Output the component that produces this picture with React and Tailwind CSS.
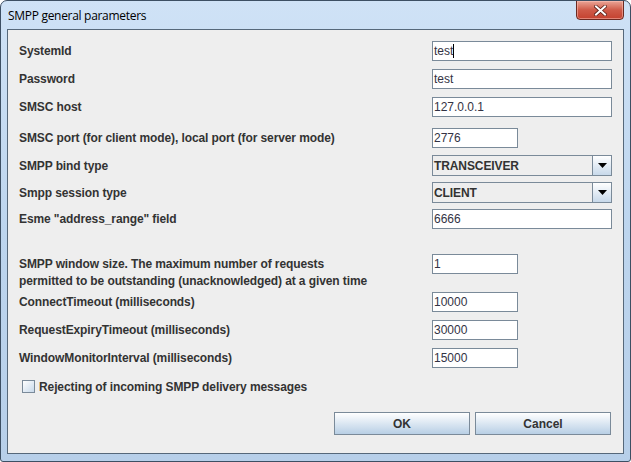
import React from "react";

const labelCls = "w-[413px] shrink-0 text-[12px] font-bold text-[#333333] leading-[14px] whitespace-nowrap tracking-[-0.1px]";

function Field({ value, w = "w-[180px]", h = "h-[20px]", caret = false }) {
  return (
    <div className={`${w} ${h} shrink-0 border border-[#7a8a99] bg-white flex items-center pl-[1px] text-[12px] text-[#333344]`}>
      <span>{value}</span>
      {caret && <span className="w-[1px] h-[14px] bg-black ml-[0px]" />}
    </div>
  );
}

function Combo({ value }) {
  return (
    <div className="w-[180px] h-[21px] shrink-0 border border-[#7a8a99] bg-[#eeeeee] flex">
      <div className="flex-1 flex items-center pl-[1px] text-[12px] font-bold text-[#333333] tracking-[-0.1px]">{value}</div>
      <div className="w-[19px] border-l border-[#7a8a99] bg-gradient-to-b from-[#ffffff] to-[#c8d9ea] flex items-center justify-center">
        <svg width="9" height="5" viewBox="0 0 9 5"><path d="M0 0H9L4.5 5Z" fill="#000" /></svg>
      </div>
    </div>
  );
}

function Row({ label, children, mt }) {
  return (
    <div className={`flex items-center ${mt} pl-[11px]`}>
      <div className={labelCls}>{label}</div>
      {children}
    </div>
  );
}

export default function App() {
  return (
    <div className="w-[631px] h-[462px] relative overflow-hidden rounded-t-[7px] rounded-b-[3px] border border-[#3d4f63] bg-gradient-to-b from-[#cfe2f6] via-[#bdd5ee] to-[#b7cfe9] font-['Liberation_Sans',Arial,sans-serif]">
      <div className="h-[28px] flex items-center pl-[7px] pt-[2px]">
        <span className="text-[12px] text-black font-['Open_Sans','Liberation_Sans',sans-serif] tracking-[-0.3px]">SMPP general parameters</span>
      </div>
      <div className="absolute left-[575px] top-[-1px] w-[48px] h-[20px] rounded-b-[4px] border border-[#6b2a22] bg-gradient-to-b from-[#e9a597] via-[#cf5a48] to-[#c4412f] flex items-center justify-center shadow-[inset_0_0_0_1px_rgba(255,200,190,0.5)]">
        <svg width="13" height="11" viewBox="0 0 13 11">
          <path d="M2 1.5L11 9.5M11 1.5L2 9.5" stroke="#5a2018" strokeWidth="3.6" strokeLinecap="square" />
          <path d="M2 1.5L11 9.5M11 1.5L2 9.5" stroke="#ffffff" strokeWidth="2" strokeLinecap="square" />
        </svg>
      </div>
      <div className="mx-[6px] h-[425px] border border-[#56687a] bg-[#eeeeee] flex flex-col">
        <Row label="SystemId" mt="mt-[11px]"><Field value="test" caret /></Row>
        <Row label="Password" mt="mt-[8px]"><Field value="test" /></Row>
        <Row label="SMSC host" mt="mt-[8px]"><Field value="127.0.0.1" /></Row>
        <Row label="SMSC port (for client mode), local port (for server mode)" mt="mt-[11px]"><Field value="2776" w="w-[86px]" /></Row>
        <Row label="SMPP bind type" mt="mt-[7px]"><Combo value="TRANSCEIVER" /></Row>
        <Row label="Smpp session type" mt="mt-[6px]"><Combo value="CLIENT" /></Row>
        <Row label={'Esme "address_range" field'} mt="mt-[6px]"><Field value="6666" /></Row>
        <div className="flex items-start mt-[25px] pl-[11px] h-[20px]">
          <div className={`${labelCls} pt-[2px] leading-[17px]`}>
            SMPP window size. The maximum number of requests<br />
            permitted to be outstanding (unacknowledged) at a given time
          </div>
          <Field value="1" w="w-[86px]" />
        </div>
        <Row label="ConnectTimeout (milliseconds)" mt="mt-[18px]"><Field value="10000" w="w-[86px]" /></Row>
        <Row label="RequestExpiryTimeout (milliseconds)" mt="mt-[8px]"><Field value="30000" w="w-[86px]" /></Row>
        <Row label="WindowMonitorInterval (milliseconds)" mt="mt-[8px]"><Field value="15000" w="w-[86px]" /></Row>
        <div className="flex items-center mt-[12px] pl-[14px] gap-[4px] h-[13px]">
          <div className="w-[13px] h-[13px] border border-[#7a8a99] bg-gradient-to-br from-[#ffffff] to-[#c8d9ea]" />
          <span className="text-[12px] font-bold text-[#333333] whitespace-nowrap tracking-[-0.1px]">Rejecting of incoming SMPP delivery messages</span>
        </div>
        <div className="flex justify-end gap-[5px] mt-[19px] pr-[12px]">
          <button className="w-[136px] h-[23px] border border-[#7a8a99] bg-gradient-to-b from-[#ffffff] to-[#b8cfe5] text-[12px] font-bold text-[#333333]">OK</button>
          <button className="w-[136px] h-[23px] border border-[#7a8a99] bg-gradient-to-b from-[#ffffff] to-[#b8cfe5] text-[12px] font-bold text-[#333333]">Cancel</button>
        </div>
      </div>
    </div>
  );
}
